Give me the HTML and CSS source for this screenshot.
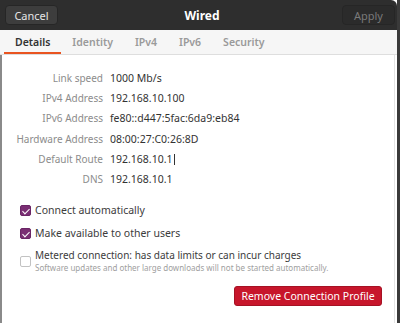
FILE: index.html
```html
<!DOCTYPE html>
<html lang="en">
<head>
    <meta charset="UTF-8">
    <meta name="viewport" content="width=device-width, initial-scale=1.0">
    <title>Wired</title>
    <link rel="stylesheet" href="styles.css">
</head>
<body>
    <div class="window">
        <header class="titlebar">
            <button class="header-button">Cancel</button>
            <h1 class="title">Wired</h1>
            <button class="header-button" disabled>Apply</button>
        </header>

        <nav class="tabs">
            <span class="tab active">Details</span>
            <span class="tab">Identity</span>
            <span class="tab">IPv4</span>
            <span class="tab">IPv6</span>
            <span class="tab">Security</span>
        </nav>

        <main class="content">
            <dl class="details">
                <dt>Link speed</dt>
                <dd>1000 Mb/s</dd>
                <dt>IPv4 Address</dt>
                <dd>192.168.10.100</dd>
                <dt>IPv6 Address</dt>
                <dd>fe80::d447:5fac:6da9:eb84</dd>
                <dt>Hardware Address</dt>
                <dd>08:00:27:C0:26:8D</dd>
                <dt>Default Route</dt>
                <dd>192.168.10.1<span class="caret"></span></dd>
                <dt>DNS</dt>
                <dd>192.168.10.1</dd>
            </dl>

            <div class="options">
                <label class="option">
                    <span class="checkbox checked"></span>
                    <span>Connect automatically</span>
                </label>
                <label class="option">
                    <span class="checkbox checked"></span>
                    <span>Make available to other users</span>
                </label>
                <label class="option">
                    <span class="checkbox"></span>
                    <span class="option-text">
                        <span>Metered connection: has data limits or can incur charges</span>
                        <small>Software updates and other large downloads will not be started automatically.</small>
                    </span>
                </label>
            </div>

            <div class="actions">
                <button class="remove-button">Remove Connection Profile</button>
            </div>
        </main>
    </div>
</body>
</html>
```

FILE: styles.css
```css
* {
    margin: 0;
    padding: 0;
    box-sizing: border-box;
}

body {
    font-family: 'Noto Sans', 'Open Sans', sans-serif;
    background: #ffffff;
    width: 400px;
    height: 323px;
    overflow: hidden;
}

.window {
    width: 400px;
    height: 323px;
    display: flex;
    flex-direction: column;
    border-right: 3px solid #3a3a3a;
    background: #ffffff;
}

.titlebar {
    height: 30px;
    background: #2e2e2e;
    display: flex;
    align-items: center;
    justify-content: space-between;
    padding: 0 2px 0 5px;
    border-top-right-radius: 6px;
}

.title {
    color: #ffffff;
    font-size: 12px;
    font-weight: 700;
    margin-left: 4px;
}

.header-button {
    width: 53px;
    height: 20px;
    font-family: inherit;
    font-size: 11px;
    color: #e6e6e6;
    background: #3d3d3d;
    border: 1px solid #262626;
    border-radius: 4px;
}

.header-button:disabled {
    color: #7a7a7a;
    background: #2b2b2b;
    border-color: #262626;
}

.tabs {
    height: 25px;
    background: #f6f6f6;
    border-bottom: 1px solid #dedede;
    display: flex;
    padding-left: 4px;
}

.tab {
    padding: 0 11px;
    font-size: 10.5px;
    font-weight: 600;
    color: #9a9a9a;
    display: flex;
    align-items: center;
    border-bottom: 2px solid transparent;
    padding-top: 1px;
}

.tab.active {
    color: #333333;
    border-bottom-color: #e95420;
}

.content {
    flex: 1;
    border-left: 2px solid #8a8a8a;
    border-right: 1px solid #e4e4e4;
    margin-right: 2px;
    padding: 13px 0 0 0;
    display: flex;
    flex-direction: column;
}

.details {
    display: grid;
    grid-template-columns: 101px 1fr;
    column-gap: 7px;
    font-size: 10.5px;
}

.details dt {
    text-align: right;
    color: #8c8c8c;
    font-size: 10px;
    height: 20.2px;
    line-height: 20.2px;
}

.details dd {
    color: #333333;
    height: 20.2px;
    line-height: 20.2px;
}

.caret {
    display: inline-block;
    width: 1px;
    height: 11px;
    background: #333333;
    vertical-align: -2px;
    margin-left: 1px;
}

.options {
    margin-top: 14px;
    padding-left: 18px;
    display: flex;
    flex-direction: column;
    gap: 9px;
    font-size: 10.5px;
    color: #3c3c3c;
}

.option {
    display: flex;
    align-items: center;
    gap: 4px;
}

.checkbox {
    width: 11px;
    height: 11px;
    border: 1px solid #c2c2c2;
    border-radius: 2px;
    background: #ffffff;
    flex-shrink: 0;
    position: relative;
}

.checkbox.checked {
    background: #7a2e73;
    border-color: #6a2565;
}

.checkbox.checked::after {
    content: '';
    position: absolute;
    left: 3px;
    top: 1px;
    width: 3px;
    height: 6px;
    border: solid #ffffff;
    border-width: 0 1.5px 1.5px 0;
    transform: rotate(45deg);
}

.option-text {
    display: flex;
    flex-direction: column;
    font-size: 10px;
}

.option-text span {
    line-height: 13px;
}

.option-text small {
    font-size: 8px;
    color: #a0a0a0;
    line-height: 11px;
}

.actions {
    display: flex;
    justify-content: flex-end;
    margin-top: 13px;
    padding-right: 12px;
}

.remove-button {
    width: 148px;
    height: 20px;
    font-family: inherit;
    font-size: 10.5px;
    color: #ffffff;
    background: #c7162b;
    border: 1px solid #a51224;
    border-radius: 3px;
}
```
